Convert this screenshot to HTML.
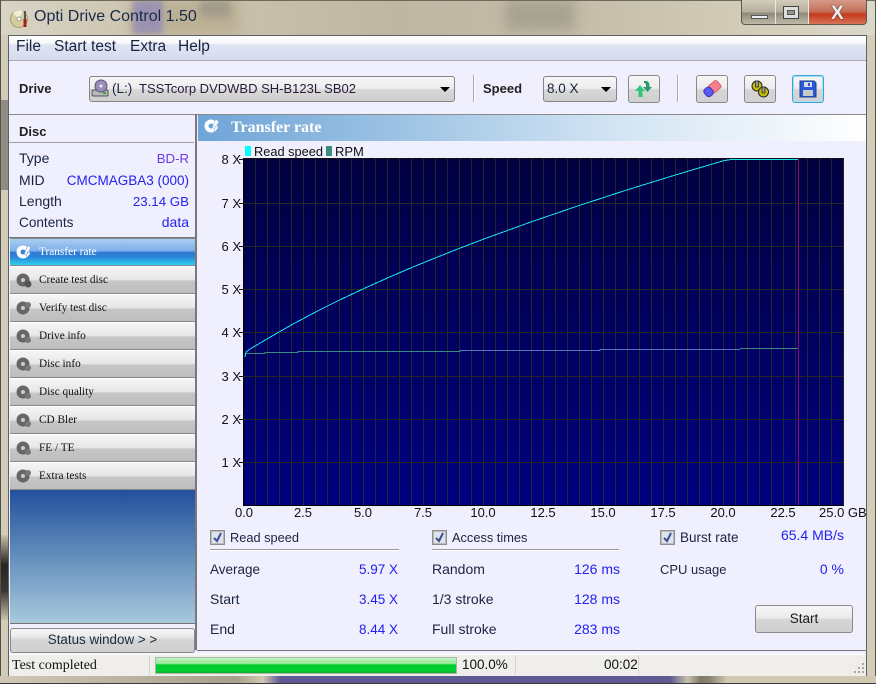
<!DOCTYPE html>
<html><head><meta charset="utf-8"><style>
html,body{margin:0;padding:0;background:#cfc8b4}
#r{position:relative;width:876px;height:684px;overflow:hidden;font-family:"Liberation Sans",sans-serif;font-size:14px;color:#1a2440;background:#d2ccb8}
.a{position:absolute;white-space:nowrap}
.v{position:absolute;white-space:nowrap;color:#2222ee;text-align:right}
.nav{position:absolute;left:10px;width:185px;height:26px;border-top:1px solid #fff;border-bottom:1px solid #888;background:linear-gradient(#f6f6f6,#e6e6e6 48%,#c6c6c6 55%,#bdbdbd);font-family:"Liberation Serif",serif;font-size:11.3px;color:#111}
.nav span{position:absolute;left:29px;top:7px}
.nav svg{position:absolute;left:6px;top:5px}
.tb{position:absolute;top:75px;width:30px;height:26px;border:1px solid #8a8a8a;border-radius:3px;background:linear-gradient(#f6f6f6,#ececec 48%,#d6d6d6 52%,#d0d0d0)}
.cb{position:absolute;width:13px;height:13px;border:1px solid #8e8e8e;outline:1px solid #bbb;outline-offset:-2px;background:#dfe3ee}
.hr{position:absolute;height:1px;background:#9c9c9c;border-bottom:1px solid #fff}
.sep{position:absolute;width:1px;background:#d6d3cf}
.yl{position:absolute;left:210px;width:31px;text-align:right;font-size:13px;color:#111}
.xl{position:absolute;top:505px;width:40px;text-align:center;font-size:13px;color:#111}
</style></head><body><div id="r">

<!-- aero frame -->
<div class="a" style="left:0;top:0;width:876px;height:35px;background:linear-gradient(90deg,#d8d4c6,#cfc8b4 12%,#bfb7a2 45%,#c4bca8 65%,#d2ccb8 85%,#dcd8c8)"></div>
<div class="a" style="left:130px;top:0;width:110px;height:35px;background:#bcb094;filter:blur(6px)"></div>
<div class="a" style="left:133px;top:0;width:30px;height:34px;background:#9a92b0;filter:blur(3px)"></div>
<div class="a" style="left:200px;top:0;width:30px;height:16px;background:#a09a8a;filter:blur(4px)"></div>
<div class="a" style="left:505px;top:0;width:70px;height:30px;background:#a8a290;filter:blur(6px)"></div>
<div class="a" style="left:0;top:0;width:876px;height:1px;background:#6e6a5e"></div>
<div class="a" style="left:0;top:0;width:1px;height:684px;background:#55524a"></div>
<div class="a" style="left:875px;top:0;width:1px;height:684px;background:#55524a"></div>
<div class="a" style="left:1px;top:100px;width:7px;height:90px;background:#8f8c84"></div>
<div class="a" style="left:1px;top:535px;width:7px;height:85px;background:linear-gradient(#c8c2ae,#2a2622 35%,#3a3530 65%,#c8c2ae)"></div>
<div class="a" style="left:0;top:676px;width:876px;height:8px;background:linear-gradient(90deg,#cfc8b4 0,#a8a08a 27%,#d0c8b0 30%,#5f5a94 32%,#5f5a94 76.5%,#c8c0a8 78.5%,#7d7868 80%,#8a8472 81%,#d0c8b0 83%,#d0c8b0 100%)"></div>
<div class="a" style="left:0;top:683px;width:876px;height:1px;background:#3a3a3a"></div>

<!-- app icon -->
<svg class="a" style="left:9px;top:8px" width="20" height="20" viewBox="0 0 20 20"><circle cx="10" cy="11" r="8.5" fill="#d4cc9c" stroke="#a8a070"/><path d="M10 11L4 5A8.5 8.5 0 0 1 14 3Z" fill="#f2efd8"/><circle cx="10" cy="11" r="2" fill="#fff" stroke="#999"/><rect x="15" y="3" width="2" height="8" fill="#555"/><rect x="14.5" y="11" width="3" height="8" fill="#a8201c"/></svg>
<div class="a" style="left:34px;top:8px;font-size:16px;color:#1a2a4a">Opti Drive Control 1.50</div>

<!-- window buttons -->
<div class="a" style="left:741px;top:0;width:126px;height:25px;border:1px solid #5a5850;border-top:0;border-radius:0 0 4px 4px;box-sizing:border-box;overflow:hidden;background:linear-gradient(#d2ccbc,#b5ae9c 50%,#8f8a7a 55%,#bdb8a8)">
<div class="a" style="left:33px;top:0;width:1px;height:25px;background:#eee8d8"></div>
<div class="a" style="left:66px;top:0;width:1px;height:25px;background:#eee8d8"></div>
<div class="a" style="left:67px;top:0;width:58px;height:25px;background:linear-gradient(#d69a88,#c47058 45%,#c8391c 58%,#d87a60)"></div>
<div class="a" style="left:9px;top:15px;width:15px;height:2px;background:#eee;border:1px solid #555"></div>
<div class="a" style="left:41px;top:6px;width:16px;height:13px;border:1px solid #444;background:#ddd;box-sizing:border-box"><div style="margin:3px;height:5px;background:#9a9484;border:1px solid #555;box-sizing:border-box"></div></div>
<div class="a" style="left:89px;top:3px;font:bold 19px 'Liberation Sans',sans-serif;color:#f0f0f0;text-shadow:0 0 1px #333,0 0 1px #333">X</div>
</div>

<!-- window body -->
<div class="a" style="left:8px;top:35px;width:859px;height:641px;background:#f0effe;border:1px solid #5f6064;box-sizing:border-box"></div>
<div class="a" style="left:9px;top:36px;width:857px;height:24px;background:linear-gradient(#fff,#f8f9fc 30%,#dfe5f2 35%,#d6dcee);border-bottom:1px solid #a6a9b6"></div>
<div class="a" style="left:16px;top:38px;font-size:15.5px">File</div>
<div class="a" style="left:54px;top:38px;font-size:15.5px">Start test</div>
<div class="a" style="left:130px;top:38px;font-size:15.5px">Extra</div>
<div class="a" style="left:178px;top:38px;font-size:15.5px">Help</div>

<div class="a" style="left:19px;top:81px;font-weight:bold;font-size:13px;color:#222">Drive</div>
<div class="a" style="left:89px;top:76px;width:364px;height:24px;border:1px solid #858585;border-radius:3px;background:linear-gradient(#f6f6f6,#ececec 48%,#d8d8d8 52%,#cfcfcf)"></div>
<svg class="a" style="left:91px;top:79px" width="18" height="18" viewBox="0 0 18 18"><rect x="1" y="11" width="16" height="6" rx="1" fill="#b8b8b8" stroke="#555"/><circle cx="10" cy="7" r="6" fill="#9a8cb8" stroke="#5a5478"/><circle cx="10" cy="7" r="1.5" fill="#eee"/><rect x="12" y="13" width="3" height="2" fill="#3a3"/></svg>
<div class="a" style="left:112px;top:81px;font-size:13.5px">(L:)</div>
<div class="a" style="left:139px;top:81px;font-size:13px;color:#2a1a3a">TSSTcorp DVDWBD SH-B123L SB02</div>
<div class="a" style="left:440px;top:87px;border:5px solid transparent;border-top:5px solid #000;border-bottom:0"></div>
<div class="a" style="left:473px;top:75px;width:1px;height:27px;background:#aaa;border-right:1px solid #fff"></div>
<div class="a" style="left:483px;top:81px;font-weight:bold;font-size:13px;color:#222">Speed</div>
<div class="a" style="left:543px;top:76px;width:72px;height:24px;border:1px solid #858585;border-radius:3px;background:linear-gradient(#f6f6f6,#ececec 48%,#d8d8d8 52%,#cfcfcf)"></div>
<div class="a" style="left:547px;top:81px;font-size:13.5px">8.0 X</div>
<div class="a" style="left:601px;top:87px;border:5px solid transparent;border-top:5px solid #000;border-bottom:0"></div>

<div class="tb" style="left:628px"><svg style="position:absolute;left:5px;top:3px" width="20" height="20" viewBox="0 0 20 20"><path d="M6 6L11 12H8.5V18H4.500V12H1Z" fill="#2dc878"/><path d="M10 2Q15 1 15.500 6V8H18L13.500 13L9 8H12V6Q12 4 10 4Z" fill="#2a9a6c"/></svg></div>
<div class="a" style="left:677px;top:75px;width:1px;height:27px;background:#aaa;border-right:1px solid #fff"></div>
<div class="tb" style="left:696px"><svg style="position:absolute;left:5px;top:3px" width="20" height="20" viewBox="0 0 20 20"><g transform="rotate(-40 10 10)"><rect x="8" y="5.500" width="11" height="9" rx="2" fill="#f4808c" stroke="#d8606c"/><rect x="1.500" y="5.500" width="8" height="9" rx="3" fill="#5a5af0" stroke="#3434c4"/></g></svg></div>
<div class="tb" style="left:744px"><svg style="position:absolute;left:5px;top:3px" width="20" height="20" viewBox="0 0 20 20"><circle cx="7" cy="7" r="5" fill="#c8c000" stroke="#222"/><circle cx="13.500" cy="13" r="5" fill="#c8c000" stroke="#222"/><rect x="5.500" y="2" width="3" height="6" fill="#999" stroke="#222" stroke-width=".7"/><rect x="12" y="8" width="3" height="6" fill="#999" stroke="#222" stroke-width=".7"/></svg></div>
<div class="tb" style="left:792px;border-color:#3aa6dc;box-shadow:inset 0 0 0 1px #a8dcf4"><svg style="position:absolute;left:6px;top:4px" width="18" height="18" viewBox="0 0 18 18"><path d="M1 1H15L17 3V17H1Z" fill="#2a5ad8" stroke="#1a3a98"/><rect x="5" y="2" width="8" height="5" fill="#d8dcea"/><rect x="9" y="3" width="2" height="3" fill="#2a5ad8"/><rect x="4" y="10" width="10" height="6" fill="#c8c8c8"/></svg></div>

<!-- left panel -->
<div class="a" style="left:9px;top:114px;width:186px;height:1px;background:#8a8a8a"></div>
<div class="a" style="left:19px;top:124px;font-weight:bold;font-size:13px;color:#222">Disc</div>
<div class="a" style="left:9px;top:142px;width:185px;height:1px;background:#a0a0a0"></div>
<div class="a" style="left:19px;top:150px">Type</div><div class="v" style="right:687px;top:151px;font-size:13.2px;color:#6a3ae8">BD-R</div>
<div class="a" style="left:19px;top:172px">MID</div><div class="v" style="right:687px;top:173px;font-size:13.5px">CMCMAGBA3 (000)</div>
<div class="a" style="left:19px;top:193px">Length</div><div class="v" style="right:687px;top:194px;font-size:13.3px">23.14 GB</div>
<div class="a" style="left:19px;top:215px;font-size:13.6px">Contents</div><div class="v" style="right:687px;top:214px">data</div>
<div class="a" style="left:9px;top:237px;width:187px;height:1px;background:#777"></div>
<div class="a" style="left:195px;top:114px;width:2px;height:536px;background:#77777c"></div>

<div class="nav" style="top:238px;height:26px;border-top-color:#8a8a8a;background:linear-gradient(#aacdf0,#7db0ea 45%,#2f78d0 52%,#2a86d8 70%,#2ed0f0);color:#fff"><svg width="16" height="16" viewBox="0 0 16 16"><circle cx="7" cy="8" r="6.500" fill="#fff"/><circle cx="7" cy="8" r="2.500" fill="#3a80d0"/><path d="M12 1L15 4L11 9L15 9L10 15L11 10L8 10Z" fill="#fff" stroke="#3a80d0" stroke-width=".5"/></svg><span>Transfer rate</span></div>
<div class="nav" style="top:266px"><svg width="16" height="16" viewBox="0 0 16 16"><circle cx="7" cy="8" r="6.500" fill="#666"/><circle cx="7" cy="8" r="2" fill="#ccc"/><circle cx="12" cy="12" r="3.500" fill="#555"/></svg><span>Create test disc</span></div>
<div class="nav" style="top:294px"><svg width="16" height="16" viewBox="0 0 16 16"><circle cx="7" cy="8" r="6.500" fill="#666"/><circle cx="7" cy="8" r="2" fill="#ccc"/><circle cx="12" cy="5" r="3" fill="#777"/></svg><span>Verify test disc</span></div>
<div class="nav" style="top:322px"><svg width="16" height="16" viewBox="0 0 16 16"><circle cx="7" cy="8" r="6.500" fill="#666"/><circle cx="7" cy="8" r="2" fill="#ccc"/><circle cx="12" cy="12" r="3" fill="#777"/></svg><span>Drive info</span></div>
<div class="nav" style="top:350px"><svg width="16" height="16" viewBox="0 0 16 16"><circle cx="7" cy="8" r="6.500" fill="#666"/><circle cx="7" cy="8" r="2" fill="#ccc"/><circle cx="12" cy="12" r="3" fill="#777"/></svg><span>Disc info</span></div>
<div class="nav" style="top:378px"><svg width="16" height="16" viewBox="0 0 16 16"><circle cx="7" cy="8" r="6.500" fill="#666"/><circle cx="7" cy="8" r="2" fill="#ccc"/><circle cx="12" cy="12" r="3" fill="#777"/></svg><span>Disc quality</span></div>
<div class="nav" style="top:406px"><svg width="16" height="16" viewBox="0 0 16 16"><circle cx="7" cy="8" r="6.500" fill="#666"/><circle cx="7" cy="8" r="2" fill="#ccc"/><circle cx="12" cy="12" r="3" fill="#777"/></svg><span>CD Bler</span></div>
<div class="nav" style="top:434px"><svg width="16" height="16" viewBox="0 0 16 16"><circle cx="7" cy="8" r="6.500" fill="#666"/><circle cx="7" cy="8" r="2" fill="#ccc"/><circle cx="12" cy="12" r="3" fill="#777"/></svg><span>FE / TE</span></div>
<div class="nav" style="top:462px"><svg width="16" height="16" viewBox="0 0 16 16"><circle cx="7" cy="8" r="6.500" fill="#666"/><circle cx="7" cy="8" r="2" fill="#ccc"/><circle cx="12" cy="5" r="3" fill="#777"/></svg><span>Extra tests</span></div>

<div class="a" style="left:10px;top:490px;width:185px;height:133px;background:linear-gradient(#22509c,#6a94c0 55%,#a8c8dc);border-bottom:1px solid #777"></div>
<div class="a" style="left:10px;top:628px;width:183px;height:23px;border:1px solid #8a8a8a;border-radius:3px;background:linear-gradient(#f6f6f6,#ececec 30%,#d4d4d4 50%,#d0d0d0);text-align:center;line-height:21px;font-size:13.4px;color:#1a2a40">Status window &gt; &gt;</div>

<!-- right panel header -->
<div class="a" style="left:197px;top:114px;width:669px;height:1px;background:#8a8a8a"></div>
<div class="a" style="left:198px;top:115px;width:668px;height:26px;background:linear-gradient(90deg,#6fa4d8,#9dc3e4 30%,#cfe2f2 60%,#fff)"></div>
<svg class="a" style="left:204px;top:118px" width="16" height="16" viewBox="0 0 16 16"><circle cx="7" cy="8" r="6.500" fill="#fff"/><circle cx="7" cy="8" r="2.500" fill="#6fa4d8"/><path d="M12 1L15 4L11 9L15 9L10 15L11 10L8 10Z" fill="#fff" stroke="#6fa4d8" stroke-width=".5"/></svg>
<div class="a" style="left:231px;top:119px;font:bold 16px 'Liberation Serif',serif;color:#fff">Transfer rate</div>
<div class="a" style="left:197px;top:650px;width:670px;height:1px;background:#777"></div>

<!-- legend -->
<div class="a" style="left:245px;top:146px;width:6px;height:10px;background:#00ffff"></div>
<div class="a" style="left:254px;top:144px;font-size:12.8px;color:#111">Read speed</div>
<div class="a" style="left:326px;top:146px;width:6px;height:10px;background:#3f8a80"></div>
<div class="a" style="left:335px;top:144px;font-size:13px;color:#111">RPM</div>

<!-- axis labels -->
<div class="yl" style="top:152px">8 X</div><div class="yl" style="top:196px">7 X</div><div class="yl" style="top:239px">6 X</div><div class="yl" style="top:282px">5 X</div><div class="yl" style="top:325px">4 X</div><div class="yl" style="top:369px">3 X</div><div class="yl" style="top:412px">2 X</div><div class="yl" style="top:455px">1 X</div>
<div class="xl" style="left:224px">0.0</div><div class="xl" style="left:283px">2.5</div><div class="xl" style="left:343px">5.0</div><div class="xl" style="left:403px">7.5</div><div class="xl" style="left:463px">10.0</div><div class="xl" style="left:523px">12.5</div><div class="xl" style="left:583px">15.0</div><div class="xl" style="left:643px">17.5</div><div class="xl" style="left:703px">20.0</div><div class="xl" style="left:763px">22.5</div><div class="xl" style="left:819px;width:50px;text-align:left">25.0 GB</div>

<!-- chart -->
<svg class="a" style="left:238px;top:155px" width="610" height="355" viewBox="238 155 610 355" shape-rendering="crispEdges">
<defs><linearGradient id="g" x1="0" y1="0" x2="0" y2="1"><stop offset="0" stop-color="#000040"/><stop offset="1" stop-color="#000080"/></linearGradient>
<pattern id="p" x="244" y="0" width="12" height="400" patternUnits="userSpaceOnUse"><rect x="11" width="1" height="400" fill="#2c2c2c"/></pattern></defs>
<rect x="243" y="158" width="601" height="347" fill="url(#g)"/>
<rect x="244" y="159" width="600" height="346" fill="url(#p)" opacity=".85"/>
<g fill="#262620"><rect x="244" y="203" width="600" height="1"/><rect x="244" y="246" width="600" height="1"/><rect x="244" y="289" width="600" height="1"/><rect x="244" y="332" width="600" height="1"/><rect x="244" y="376" width="600" height="1"/><rect x="244" y="419" width="600" height="1"/><rect x="244" y="462" width="600" height="1"/></g>
<rect x="243" y="158" width="1" height="348" fill="#000"/><rect x="243" y="505" width="601" height="1" fill="#000"/><rect x="243" y="158" width="601" height="1" fill="#111"/><rect x="843" y="158" width="1" height="348" fill="#222"/>
<g fill="#111"><rect x="239" y="159" width="4" height="1"/><rect x="239" y="203" width="4" height="1"/><rect x="239" y="246" width="4" height="1"/><rect x="239" y="289" width="4" height="1"/><rect x="239" y="332" width="4" height="1"/><rect x="239" y="376" width="4" height="1"/><rect x="239" y="419" width="4" height="1"/><rect x="239" y="462" width="4" height="1"/></g>
<rect x="798" y="159" width="1" height="346" fill="#8a0a78"/>
<g fill="none">
<polyline stroke="#3a8a80" stroke-width="1" points="245,353.5 265,353.5 265,352.5 298,352.5 298,351.5 460,351.5 460,350.5"/>
<polyline stroke="#5a78b8" stroke-width="1" points="460,350.5 600,350.5 600,349.5 740,349.5"/>
<polyline stroke="#3a8a80" stroke-width="1" points="740,348.5 798,348.5"/>
<polyline stroke="#18e8f0" stroke-width="1" points="245,357 246,352 250,349 268,338.4 292,324.6 316,311.8 340,299.8 364,288.5 388,277.7 412,267.4 436,257.6 460,248.1 484,239 532,221.6 580,205.2 628,189.6 676,174.8 724,160.6 731,159.5 798,159.5"/>
</g>
</svg>

<!-- stats -->
<div class="cb" style="left:210px;top:530px"><svg style="position:absolute;left:1px;top:1px" width="11" height="11" viewBox="0 0 11 11"><path d="M2 6L5 9L9 1" fill="none" stroke="#3a5090" stroke-width="2"/></svg></div>
<div class="a" style="left:230px;top:530px;font-size:12.8px">Read speed</div>
<div class="hr" style="left:210px;top:549px;width:189px"></div>
<div class="a" style="left:210px;top:562px;font-size:13.5px">Average</div><div class="v" style="right:478px;top:562px;font-size:13.5px">5.97 X</div>
<div class="a" style="left:210px;top:591px">Start</div><div class="v" style="right:478px;top:592px;font-size:13.5px">3.45 X</div>
<div class="a" style="left:210px;top:621px">End</div><div class="v" style="right:478px;top:622px;font-size:13.5px">8.44 X</div>

<div class="cb" style="left:432px;top:530px"><svg style="position:absolute;left:1px;top:1px" width="11" height="11" viewBox="0 0 11 11"><path d="M2 6L5 9L9 1" fill="none" stroke="#3a5090" stroke-width="2"/></svg></div>
<div class="a" style="left:452px;top:530px;font-size:12.8px">Access times</div>
<div class="hr" style="left:432px;top:549px;width:187px"></div>
<div class="a" style="left:432px;top:561px">Random</div><div class="v" style="right:256px;top:561px">126 ms</div>
<div class="a" style="left:432px;top:591px">1/3 stroke</div><div class="v" style="right:256px;top:591px">128 ms</div>
<div class="a" style="left:432px;top:621px">Full stroke</div><div class="v" style="right:256px;top:621px">283 ms</div>

<div class="cb" style="left:660px;top:530px"><svg style="position:absolute;left:1px;top:1px" width="11" height="11" viewBox="0 0 11 11"><path d="M2 6L5 9L9 1" fill="none" stroke="#3a5090" stroke-width="2"/></svg></div>
<div class="a" style="left:680px;top:530px;font-size:13.5px">Burst rate</div>
<div class="v" style="right:32px;top:527px">65.4 MB/s</div>
<div class="a" style="left:660px;top:562px;font-size:13px">CPU usage</div><div class="v" style="right:32px;top:561px">0 %</div>
<div class="a" style="left:755px;top:605px;width:96px;height:26px;border:1px solid #8a8a8a;border-radius:3px;background:linear-gradient(#f6f6f6,#ececec 45%,#d6d6d6 52%,#cecece);text-align:center;line-height:25px;font-size:13.5px;color:#1a1a1a">Start</div>

<!-- status bar -->
<div class="a" style="left:9px;top:654px;width:857px;height:21px;background:#f0eeeb;border-top:1px solid #fff"></div>
<div class="a" style="left:12px;top:658px;font:14px 'Liberation Serif',serif;color:#111">Test completed</div>
<div class="sep" style="left:149px;top:655px;height:20px"></div>
<div class="a" style="left:155px;top:657px;width:300px;height:15px;border:1px solid #a8b8a8;background:linear-gradient(#c4f4c4,#8ce88c 40%,#00cc30 45%,#00d030 85%,#20a830)"></div>
<div class="a" style="left:462px;top:657px;font-size:13.5px;color:#111">100.0%</div>
<div class="sep" style="left:515px;top:655px;height:20px"></div>
<div class="a" style="left:604px;top:657px;font-size:13.5px;color:#111">00:02</div>
<div class="sep" style="left:638px;top:655px;height:20px"></div>
<svg class="a" style="left:852px;top:661px" width="14" height="14" viewBox="0 0 14 14" fill="#a8a8a0"><rect x="10" y="2" width="2" height="2"/><rect x="6" y="6" width="2" height="2"/><rect x="10" y="6" width="2" height="2"/><rect x="2" y="10" width="2" height="2"/><rect x="6" y="10" width="2" height="2"/><rect x="10" y="10" width="2" height="2"/></svg>

</div></body></html>
